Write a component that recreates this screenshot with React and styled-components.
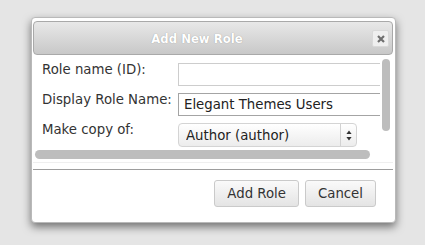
import styled, { createGlobalStyle } from "styled-components";

const GlobalStyle = createGlobalStyle`
  html, body {
    margin: 0;
    padding: 0;
    background: #e5e5e5;
    font-family: "DejaVu Sans", Verdana, sans-serif;
  }
`;

const Page = styled.div`
  width: 425px;
  height: 245px;
  padding: 17px 0 0 31px;
  box-sizing: border-box;
`;

const Dialog = styled.div`
  width: 365px;
  height: 206px;
  box-sizing: border-box;
  background: #fff;
  border: 1px solid #b9b9b9;
  border-radius: 4px;
  padding: 3px 2px 0 1px;
  box-shadow: 0 4px 9px rgba(0, 0, 0, 0.5);
  display: flex;
  flex-direction: column;
`;

const TitleBar = styled.div`
  height: 34px;
  box-sizing: border-box;
  border: 1px solid #a9a9a9;
  border-radius: 4px;
  background: linear-gradient(#e8e8e8, #c8c8c8);
  display: flex;
  align-items: center;
  padding: 1px 3px 0 0;
`;

const Title = styled.div`
  flex: 1;
  text-align: center;
  padding-right: 12px;
  color: #fff;
  font-weight: bold;
  font-size: 11.7px;
  text-shadow: 0 0 1px rgba(0, 0, 0, 0.35);
`;

const CloseButton = styled.button`
  width: 17px;
  height: 17px;
  padding: 0;
  border: 1px solid #d9d9d9;
  border-radius: 2px;
  background: #efefef;
  display: flex;
  align-items: center;
  justify-content: center;
`;

// scroll pane drawn as grid: viewport | vertical bar / horizontal bar | corner
const ScrollFrame = styled.div`
  display: grid;
  grid-template-columns: 347px 12px;
  grid-template-rows: 95px 12px;
  border-bottom: 1px solid #efefef;
`;

const Viewport = styled.div`
  overflow: hidden;
`;

const VTrack = styled.div`
  padding: 4px 2px 0;
`;

const VThumb = styled.div`
  width: 8px;
  height: 72px;
  border-radius: 4px;
  background: #bdbdbd;
`;

const HTrack = styled.div`
  padding: 0 0 0 2px;
`;

const HThumb = styled.div`
  width: 335px;
  height: 9px;
  border-radius: 5px;
  background: #bdbdbd;
`;

const Form = styled.div`
  width: 355px;
  box-sizing: border-box;
  padding: 8px 0 0 9px;
  display: grid;
  grid-template-columns: 136px 210px;
  row-gap: 7px;
  align-items: start;
`;

const Label = styled.label`
  font-size: 13.3px;
  line-height: 16px;
  color: #333;
  margin-top: -1px;
  white-space: nowrap;
`;

const TextInput = styled.input`
  width: 210px;
  height: 23px;
  box-sizing: border-box;
  border: 1px solid ${(p) => (p.$dark ? "#a4a4a4" : "#cdcdcd")};
  padding: 0 5px;
  font-family: "DejaVu Sans", Verdana, sans-serif;
  font-size: 13.3px;
  color: #222;
  background: #fff;
  outline: none;
`;

const SelectWrap = styled.div`
  position: relative;
  width: 179px;
  height: 24px;
`;

const Select = styled.select`
  appearance: none;
  width: 179px;
  height: 24px;
  box-sizing: border-box;
  border: 1px solid #d4d4d4;
  border-radius: 4px;
  background: linear-gradient(#ffffff, #ececec);
  padding: 0 0 0 7px;
  font-family: "DejaVu Sans", Verdana, sans-serif;
  font-size: 13.3px;
  color: #222;
  outline: none;
`;

const Arrows = styled.div`
  position: absolute;
  top: 1px;
  right: 1px;
  bottom: 1px;
  width: 15px;
  border-left: 1px solid #d2d2d2;
  display: flex;
  align-items: center;
  justify-content: center;
  pointer-events: none;
`;

const Footer = styled.div`
  margin-top: 6px;
  border-top: 1px solid #9d9d9d;
  display: flex;
  justify-content: flex-end;
  gap: 6px;
  padding: 10px 17px 0 0;
`;

const Button = styled.button`
  height: 27px;
  padding: 0 12px;
  border: 1px solid #cacaca;
  border-radius: 3px;
  background: linear-gradient(#fafafa, #e4e4e4);
  font-family: "DejaVu Sans", Verdana, sans-serif;
  font-size: 13.3px;
  color: #333;
`;

export default function App() {
  return (
    <Page>
      <GlobalStyle />
      <Dialog>
        <TitleBar>
          <Title>Add New Role</Title>
          <CloseButton aria-label="close">
            <svg width="8" height="8" viewBox="0 0 8 8">
              <path d="M1 1 L7 7 M7 1 L1 7" stroke="#6f6f6f" strokeWidth="2.2" />
            </svg>
          </CloseButton>
        </TitleBar>
        <ScrollFrame>
          <Viewport>
            <Form>
              <Label>Role name (ID):</Label>
              <TextInput type="text" defaultValue="" />
              <Label>Display Role Name:</Label>
              <TextInput $dark type="text" defaultValue="Elegant Themes Users" />
              <Label>Make copy of:</Label>
              <SelectWrap>
                <Select defaultValue="author">
                  <option value="author">Author (author)</option>
                </Select>
                <Arrows>
                  <svg width="6" height="11" viewBox="0 0 6 11">
                    <path d="M3 0.5 L5.6 4 L0.4 4 Z M3 10.5 L5.6 7 L0.4 7 Z" fill="#333" />
                  </svg>
                </Arrows>
              </SelectWrap>
            </Form>
          </Viewport>
          <VTrack>
            <VThumb />
          </VTrack>
          <HTrack>
            <HThumb />
          </HTrack>
          <div />
        </ScrollFrame>
        <Footer>
          <Button>Add Role</Button>
          <Button>Cancel</Button>
        </Footer>
      </Dialog>
    </Page>
  );
}
